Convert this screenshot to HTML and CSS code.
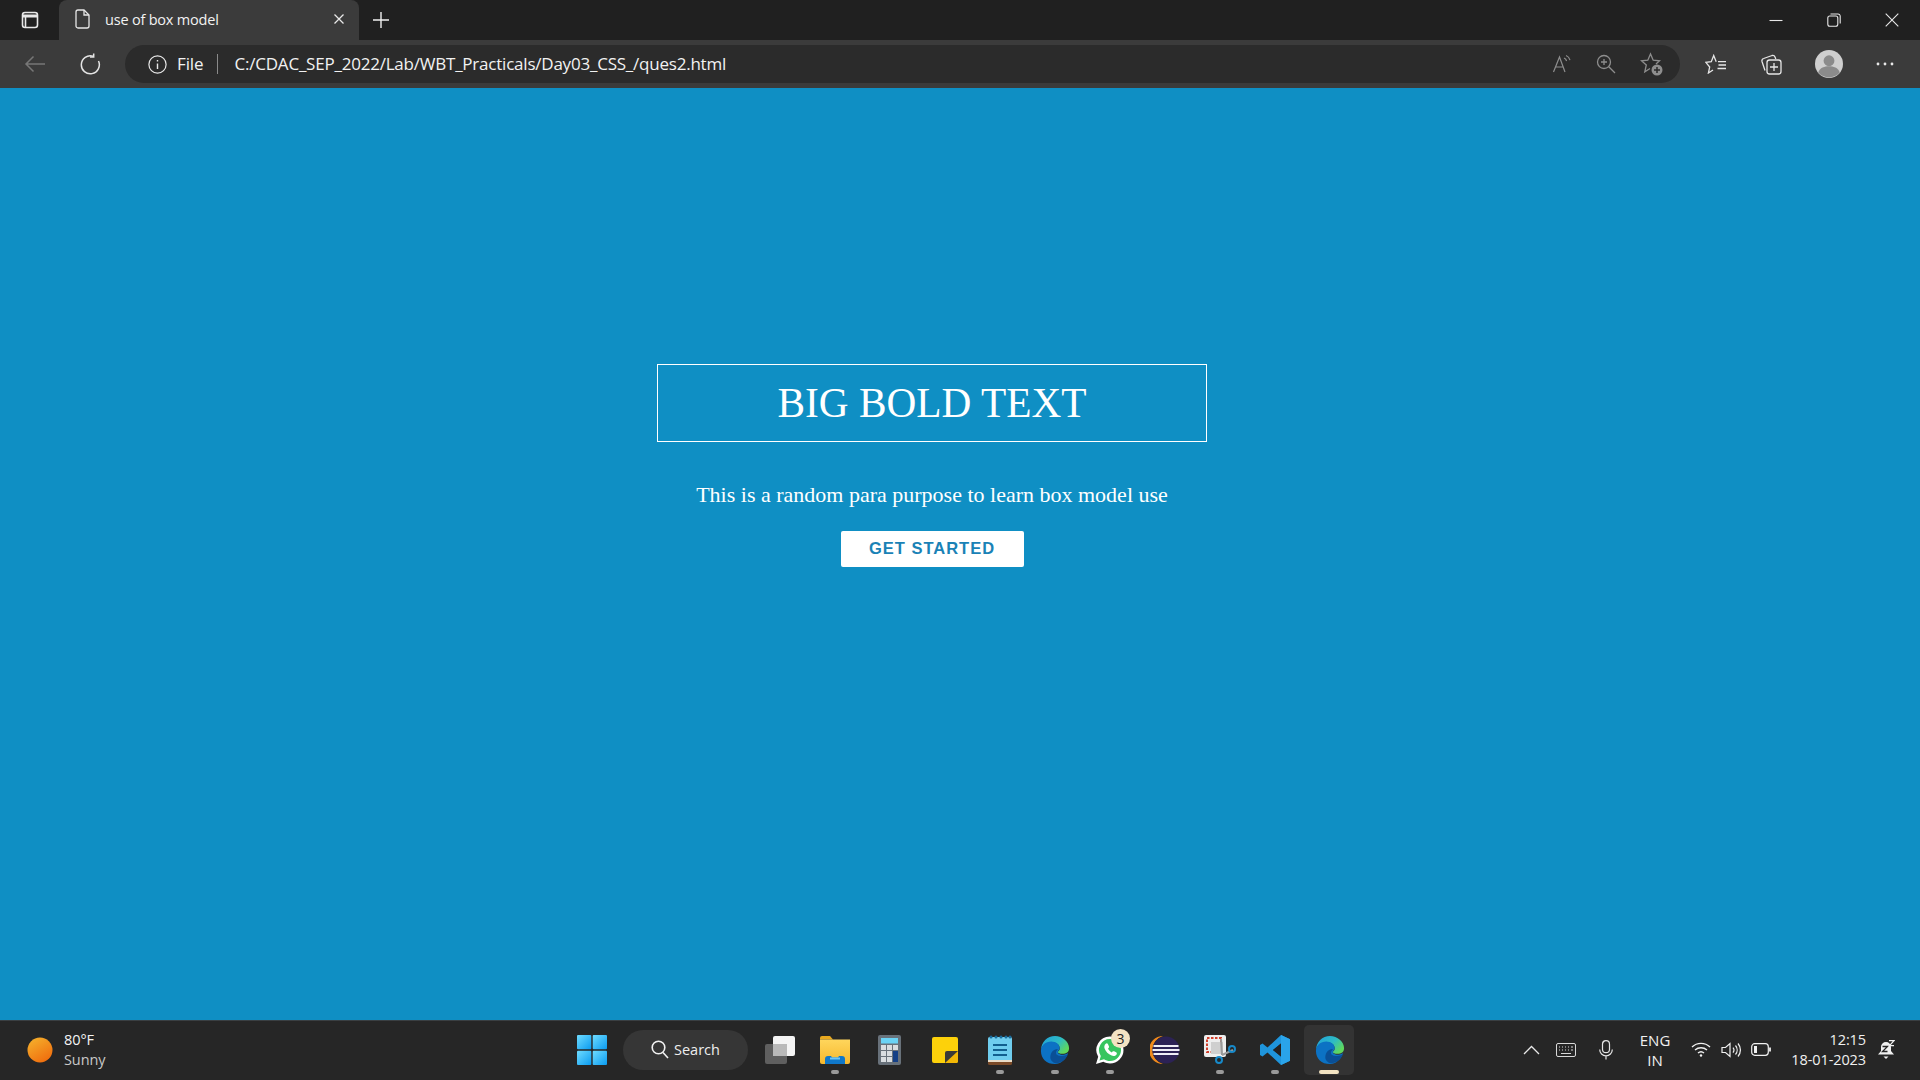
FILE: index.html
```html
<!DOCTYPE html>
<html lang="en">
<head>
<meta charset="utf-8">
<title>use of box model</title>
<link rel="stylesheet" href="styles.css">
</head>
<body>
<svg class="defs" width="0" height="0" aria-hidden="true">
  <defs>
    <linearGradient id="winG" x1="0" y1="0" x2="1" y2="1"><stop offset="0" stop-color="#6fdcff"/><stop offset="1" stop-color="#0a9bf0"/></linearGradient>
    <linearGradient id="sunG" x1="0" y1="0" x2="0.6" y2="1"><stop offset="0" stop-color="#f5b52e"/><stop offset="1" stop-color="#f0700f"/></linearGradient>
    <linearGradient id="edgeG" x1="0" y1="0" x2="1" y2="0.6"><stop offset="0" stop-color="#1f9fdc"/><stop offset="0.6" stop-color="#2ebcc4"/><stop offset="1" stop-color="#5fd85c"/></linearGradient>
    <linearGradient id="folderG" x1="0" y1="0" x2="0" y2="1"><stop offset="0" stop-color="#ffd65c"/><stop offset="1" stop-color="#f5b82e"/></linearGradient>
    <symbol id="edge" viewBox="0 0 32 32">
      <path d="M1 17C1 7 8 1 16 1c8 0 15 6 15 13 0 4-3 6-7 6-3 0-5-1-5-2 0-1 2-1 2-4 0-3-3-6-7-6C7 8 1 11 1 17z" fill="url(#edgeG)"/>
      <path d="M1 17C1 11 6 7 12 7c5 0 9 3 9 7 0 2-2 2-2 4 0 2 3 3 6 3 2 0 4-1 5-2-2 7-8 12-14 12C7 31 1 25 1 17z" fill="#0c72c4"/>
      <path d="M11 24c0-5 3-9 8-9 0 1-2 2-2 4 0 3 4 4 8 3 2 0 4-1 5-2-2 6-7 10-13 10-3 0-6-3-6-6z" fill="#0a4f96"/>
    </symbol>
  </defs>
</svg>
<div class="window">
  <header class="tabstrip">
    <button class="tab-side" aria-label="Tab actions">
      <svg width="20" height="20" viewBox="0 0 20 20" fill="none" stroke="#e8e8e8" stroke-width="1.6"><rect x="2.5" y="2.5" width="15" height="15" rx="2.5"/><path d="M2.5 6h15" stroke-width="3"/><path d="M5.5 7v10"/></svg>
    </button>
    <div class="tab">
      <svg class="tab-doc" width="16" height="20" viewBox="0 0 16 20" fill="none" stroke="#e6e6e6" stroke-width="1.3"><path d="M3 1h6l5 5v11a2 2 0 0 1-2 2H3a2 2 0 0 1-2-2V3a2 2 0 0 1 2-2z"/><path d="M9 1v5h5"/></svg>
      <span class="tab-title">use of box model</span>
      <svg class="tab-x" width="12" height="12" viewBox="0 0 12 12" stroke="#e8e8e8" stroke-width="1.3"><path d="M1.5 1.5l9 9M10.5 1.5l-9 9"/></svg>
    </div>
    <svg class="tab-plus" width="18" height="18" viewBox="0 0 18 18" stroke="#f0f0f0" stroke-width="1.4"><path d="M9 1v16M1 9h16"/></svg>
    <div class="win-controls">
      <svg width="14" height="14" viewBox="0 0 14 14" stroke="#e8e8e8" stroke-width="1.1"><path d="M0.5 7.5h13"/></svg>
      <svg width="14" height="14" viewBox="0 0 14 14" fill="none" stroke="#e8e8e8" stroke-width="1.1"><rect x="0.8" y="3" width="10" height="10.2" rx="2"/><path d="M3.5 1h7.5A2.2 2.2 0 0 1 13.2 3.2V10.5"/></svg>
      <svg width="14" height="14" viewBox="0 0 14 14" stroke="#e8e8e8" stroke-width="1.1"><path d="M0.7 0.7l12.6 12.6M13.3 0.7L0.7 13.3"/></svg>
    </div>
  </header>

  <nav class="toolbar">
    <svg class="nav-back" width="22" height="18" viewBox="0 0 22 18" fill="none" stroke="#777" stroke-width="1.5"><path d="M21 9H2M9.5 1.500L2 9l7.5 7.5"/></svg>
    <svg class="nav-reload" width="22" height="22" viewBox="0 0 22 22" fill="none" stroke="#e4e4e4" stroke-width="1.5"><path d="M19.500 8A9 9 0 1 1 14 3.200"/><path d="M14.700 0.500V4h-3.700"/></svg>
    <div class="address">
      <svg class="addr-info" width="19" height="19" viewBox="0 0 19 19" fill="none" stroke="#e8e8e8" stroke-width="1.2"><circle cx="9.5" cy="9.5" r="8.6"/><path d="M9.5 8.5v5.5M9.5 5v1.6" stroke-width="1.4"/></svg>
      <span class="addr-file">File</span>
      <span class="addr-sep"></span>
      <span class="addr-url">C:/CDAC_SEP_2022/Lab/WBT_Practicals/Day03_CSS_/ques2.html</span>
      <div class="addr-icons">
        <svg width="20" height="20" viewBox="0 0 20 20" fill="none" stroke="#8e8e8e" stroke-width="1.2"><path d="M1.5 18L7.5 3 13 18M3.500 13h8"/><path d="M12 4c1.400.6 2.200 1.600 2.600 3M14 1.500c2 .8 3.400 2.400 4 4.600"/></svg>
        <svg width="20" height="20" viewBox="0 0 20 20" fill="none" stroke="#8e8e8e" stroke-width="1.3"><circle cx="8" cy="8" r="6.5"/><path d="M12.800 12.800L19 19M8 5v6M5 8h6"/></svg>
        <svg width="24" height="24" viewBox="0 0 24 24" fill="none" stroke="#8e8e8e" stroke-width="1.3"><path d="M10 16.500L4.800 19.800l1.500-6.800L1.500 8.800l6.300-.6L10.500 2l2.700 6.200 6.300.6-3.500 3.200"/><circle cx="17" cy="18" r="5.500" fill="#8e8e8e" stroke="none"/><path d="M17 15v6M14 18h6" stroke="#2b2b2b" stroke-width="1.500"/></svg>
      </div>
    </div>
    <div class="tool-icons">
      <svg width="22" height="20" viewBox="0 0 22 20" fill="none" stroke="#e6e6e6" stroke-width="1.300"><path d="M8 16L3.400 19l1.300-6L0.800 8.300l5.500-.6L8.700 1.500l2.500 6.200"/><path d="M13 7.700h8M13.500 11h7.500M12.500 14.500h8.500"/></svg>
      <svg width="22" height="22" viewBox="0 0 22 22" fill="none" stroke="#e6e6e6" stroke-width="1.300"><path d="M5 17.500L2 8.500a2.500 2.500 0 0 1 1.700-3L12 2.500a2.500 2.500 0 0 1 3 1.500l.8 2"/><rect x="7" y="7" width="14" height="14" rx="2.500"/><path d="M14 10v8M10 14h8"/></svg>
      <svg width="28" height="28" viewBox="0 0 30 30"><circle cx="15" cy="15" r="15" fill="#cfcfcf"/><circle cx="15" cy="11.500" r="5.800" fill="#8b8b8b"/><path d="M3.500 24c1.500-5 7-6.500 11.500-6.500S25 19 26.500 24A15 15 0 0 1 3.500 24z" fill="#8b8b8b"/></svg>
      <svg width="18" height="4" viewBox="0 0 18 4" fill="#e8e8e8"><circle cx="2" cy="2" r="1.400"/><circle cx="9" cy="2" r="1.400"/><circle cx="16" cy="2" r="1.400"/></svg>
    </div>
  </nav>

  <main class="page">
    <div class="hero">
      <h1 class="hero-title">BIG BOLD TEXT</h1>
      <p class="hero-text">This is a random para purpose to learn box model use</p>
      <a class="hero-btn">GET STARTED</a>
    </div>
  </main>

  <footer class="taskbar">
    <div class="weather">
      <svg width="26" height="26" viewBox="0 0 26 26"><circle cx="13" cy="13" r="12.500" fill="url(#sunG)"/></svg>
      <div class="weather-text"><span class="temp">80°F</span><span class="cond">Sunny</span></div>
    </div>

    <div class="apps">
      <div class="app">
        <svg width="30" height="30" viewBox="0 0 30 30" fill="url(#winG)"><rect x="0" y="0" width="14.300" height="14.300" rx="1"/><rect x="15.700" y="0" width="14.300" height="14.300" rx="1"/><rect x="0" y="15.700" width="14.300" height="14.300" rx="1"/><rect x="15.700" y="15.700" width="14.300" height="14.300" rx="1"/></svg>
      </div>
      <div class="search">
        <svg width="18" height="19" viewBox="0 0 18 19" fill="none" stroke="#f2f2f2" stroke-width="1.600"><circle cx="7.500" cy="7.500" r="6.300"/><path d="M12 12.500l5 5.500"/></svg>
        <span>Search</span>
      </div>
      <div class="app">
        <svg width="30" height="28" viewBox="0 0 30 28"><rect x="8" y="0" width="22" height="20" rx="2" fill="#f4f4f4"/><rect x="0" y="8" width="22" height="20" rx="2" fill="#5f5f5f"/><rect x="8" y="8" width="14" height="12" fill="#b9b9b9"/></svg>
      </div>
      <div class="app running">
        <svg width="30" height="28" viewBox="0 0 30 28"><path d="M0 2a2 2 0 0 1 2-2h8l3 3.500H0z" fill="#e9a91f"/><path d="M0 3.500h30V26a2 2 0 0 1-2 2H2a2 2 0 0 1-2-2z" fill="url(#folderG)"/><path d="M5 28v-5a3 3 0 0 1 3-3h3l1 1.500h6l1-1.500h3a3 3 0 0 1 3 3v5z" fill="#0f77c9"/><rect x="10" y="21.500" width="10" height="2" fill="#6dc6f5"/></svg>
      </div>
      <div class="app">
        <svg width="23" height="30" viewBox="0 0 23 30"><rect width="23" height="30" rx="2" fill="#68717a"/><rect x="3" y="3" width="17" height="5.500" fill="#6bd3f5"/><g fill="#d9dde0"><rect x="3" y="10" width="5" height="5"/><rect x="9" y="10" width="5" height="5"/><rect x="15" y="10" width="5" height="5"/><rect x="3" y="16" width="5" height="5"/><rect x="9" y="16" width="5" height="5"/><rect x="3" y="22" width="5" height="5"/><rect x="9" y="22" width="5" height="5"/></g><rect x="15" y="16" width="5" height="11" fill="#143f86"/></svg>
      </div>
      <div class="app">
        <svg width="26" height="26" viewBox="0 0 26 26"><rect width="26" height="26" rx="2" fill="#fdd10a"/><path d="M13 26V16a2 2 0 0 1 2-2h11v10a2 2 0 0 1-2 2z" fill="#f2b705"/><path d="M13 26V16a2 2 0 0 1 2-2h11z" fill="#3b3a36"/></svg>
      </div>
      <div class="app running">
        <svg width="24" height="30" viewBox="0 0 24 30"><rect y="2" width="24" height="26" rx="1.500" fill="#6fcdee"/><path d="M0 26h24v2.500a1.500 1.500 0 0 1-1.500 1.500h-21A1.500 1.500 0 0 1 0 28.500z" fill="#7a4a28"/><rect y="25" width="24" height="2" fill="#e8dcc8"/><g fill="#125f8e"><rect x="5" y="9" width="14" height="2"/><rect x="5" y="14" width="14" height="2"/><rect x="5" y="19" width="14" height="2"/></g><g fill="#1a6c9c"><circle cx="3" cy="2" r="1.500"/><circle cx="8" cy="2" r="1.500"/><circle cx="13" cy="2" r="1.500"/><circle cx="18" cy="2" r="1.500"/><circle cx="22" cy="2" r="1.500"/></g></svg>
      </div>
      <div class="app running"><svg width="30" height="30"><use href="#edge"/></svg></div>
      <div class="app running">
        <svg width="30" height="30" viewBox="0 0 30 30"><path d="M15 1.500a13.500 13.500 0 0 1 0 27c-2.400 0-4.600-.6-6.600-1.700L1 29l2.200-7.200A13.500 13.500 0 0 1 15 1.500z" fill="#fff"/><path d="M15 4a11 11 0 0 1 0 22c-2.200 0-4.300-.7-6-1.800L4.500 25.500 5.800 21A11 11 0 0 1 15 4z" fill="#37c55f"/><path d="M10.500 9c1-1 2-.8 2.500.3l1 2.200c.2.600 0 1-.4 1.500l-.6.700c.8 1.500 2.200 2.900 3.800 3.700l.8-.8c.5-.5 1-.5 1.500-.3l2 1c.9.500 1 1.500.3 2.400-1 1.300-2.800 1.700-4.800.9-3.200-1.200-6.100-4.100-7.100-7.300-.5-1.700 0-3.300 1-4.300z" fill="#fff"/></svg>
        <span class="badge">3</span>
      </div>
      <div class="app">
        <svg width="30" height="30" viewBox="0 0 30 30"><path d="M13 1A14 14 0 0 0 13 29 14.500 14.500 0 0 1 13 1z" fill="#f08a1d"/><circle cx="16" cy="15" r="13.500" fill="#2c2255"/><g fill="#efeef6"><rect x="3.500" y="10" width="25" height="2"/><rect x="2.500" y="14" width="27" height="2"/><rect x="3.500" y="18" width="25" height="2"/></g></svg>
      </div>
      <div class="app running">
        <svg width="32" height="30" viewBox="0 0 32 30"><rect width="22" height="22" rx="2" fill="#eeeeee"/><path d="M3 3h14v14H3z" fill="none" stroke="#d2402d" stroke-width="2" stroke-dasharray="2.500 1.500"/><rect x="7" y="7" width="12" height="12" fill="#cfcfcf"/><path d="M17 4l1 16" stroke="#9a9a9a" stroke-width="2"/><path d="M18 20l11-5" stroke="#9a9a9a" stroke-width="2"/><circle cx="15" cy="25" r="3" fill="none" stroke="#1789c9" stroke-width="2"/><circle cx="28" cy="14" r="3" fill="none" stroke="#1789c9" stroke-width="2"/></svg>
      </div>
      <div class="app running">
        <svg width="30" height="30" viewBox="0 0 30 30"><path d="M21 0l9 4.200v21.600L21 30 7.500 17.500 2.500 21.500 0 20V10l2.500-1.500 5 4zM21 8.500L13 15l8 6.500z" fill="#1f95dc"/><path d="M21 0l9 4.200v21.600L21 30z" fill="#2aa4ea"/><path d="M21 8.500L13 15l8 6.500z" fill="#232323"/></svg>
      </div>
      <div class="app active">
        <svg width="30" height="30"><use href="#edge"/></svg>
      </div>
    </div>

    <div class="tray">
      <svg class="tray-up" width="17" height="10" viewBox="0 0 17 10" fill="none" stroke="#e8e8e8" stroke-width="1.300"><path d="M1 9l7.500-7.500L16 9"/></svg>
      <svg class="tray-kbd" width="20" height="14" viewBox="0 0 20 14" fill="none" stroke="#d8d8d8" stroke-width="1"><rect x="0.500" y="0.500" width="19" height="13" rx="1.500"/><path d="M3 4h1M6 4h1M9 4h1M12 4h1M15 4h2M3 7h1M6 7h1M9 7h1M12 7h1M15 7h2M5 10.500h10" stroke-width="1.200"/></svg>
      <svg class="tray-mic" width="14" height="20" viewBox="0 0 14 20" fill="none" stroke="#e4e4e4" stroke-width="1.200"><rect x="3.500" y="0.700" width="7" height="12" rx="3.500"/><path d="M0.700 9.500a6.300 6.300 0 0 0 12.600 0M7 16v3.500"/></svg>
      <div class="tray-lang"><span>ENG</span><span>IN</span></div>
      <div class="tray-net">
        <svg width="20" height="15" viewBox="0 0 20 15" fill="none" stroke="#f0f0f0" stroke-width="1.400"><path d="M1 5a13 13 0 0 1 18 0M4 8a9 9 0 0 1 12 0M7 11a4.500 4.500 0 0 1 6 0"/><circle cx="10" cy="13.500" r="1.200" fill="#f0f0f0" stroke="none"/></svg>
        <svg width="20" height="16" viewBox="0 0 20 16" fill="none" stroke="#f0f0f0" stroke-width="1.200"><path d="M1 5.500h3.500L9 1.500v13l-4.500-4H1z"/><path d="M12 5.500a4 4 0 0 1 0 5M14.500 3.500a7 7 0 0 1 0 9M17 1.500a10 10 0 0 1 0 13"/></svg>
        <svg width="20" height="13" viewBox="0 0 20 13" fill="none" stroke="#f0f0f0" stroke-width="1.200"><rect x="0.700" y="0.700" width="16.600" height="11.600" rx="3"/><rect x="3" y="3" width="3" height="7" fill="#f0f0f0" stroke="none"/><path d="M19 4.500v4" stroke-width="1.800"/></svg>
      </div>
      <div class="tray-clock"><span>12:15</span><span>18-01-2023</span></div>
      <svg class="tray-bell" width="17" height="20" viewBox="0 0 17 20"><path d="M8 2a5 5 0 0 1 5 5v4l3 3.500H0L3 11V7a5 5 0 0 1 5-5z" fill="#f0f0f0"/><path d="M5.500 16.500h5L8 19z" fill="#f0f0f0"/><path d="M4.500 6.500h5l-5 5h5" fill="none" stroke="#262626" stroke-width="1.300"/><path d="M11 0.700h5l-4.500 5H16" fill="none" stroke="#f0f0f0" stroke-width="1.200"/></svg>
    </div>
  </footer>
</div>
</body>
</html>
```

FILE: styles.css
```css
* { box-sizing: border-box; }
html, body { margin: 0; height: 100%; }
body { overflow: hidden; font-family: "Open Sans", "Noto Sans", sans-serif; color: #fff; }
.defs { position: absolute; }
.window { display: flex; flex-direction: column; height: 1080px; }

/* tab strip */
.tabstrip { flex: 0 0 40px; background: #202020; display: flex; align-items: stretch; }
.tab-side { width: 59px; padding: 0 0 0 1px; border: 0; background: none; display: flex; align-items: center; justify-content: center; }
.tab { width: 300px; background: #3b3b3b; border-radius: 8px 8px 0 0; display: flex; align-items: center; padding: 0 14px 2px 16px; }
.tab-doc { margin-right: 14px; flex: none; }
.tab-title { flex: 1; font-size: 14.500px; letter-spacing: -0.2px; color: #f2f2f2; }
.tab-x { flex: none; }
.tab-plus { align-self: center; margin-left: 13px; }
.win-controls { margin-left: auto; display: flex; align-items: center; gap: 44px; padding-right: 21px; }

/* toolbar */
.toolbar { flex: 0 0 48px; background: #3b3b3b; display: flex; align-items: center; padding: 0 24px; }
.nav-back { flex: none; }
.nav-reload { flex: none; margin-left: 33px; }
.address { flex: none; width: 1555px; height: 38px; margin-left: 24px; background: #2b2b2b; border-radius: 19px; display: flex; align-items: center; padding: 0 0 0 23px; }
.addr-file { margin: 0 0 2px 10px; font-size: 17px; letter-spacing: -0.1px; color: #f2f2f2; }
.addr-sep { width: 1px; height: 20px; margin: 0 17px 0 13px; background: #8a8a8a; }
.addr-url { margin-bottom: 2px; font-size: 17px; letter-spacing: -0.22px; color: #f2f2f2; white-space: nowrap; }
.addr-icons { margin-left: auto; display: flex; align-items: center; gap: 24px; padding-right: 16px; }
.tool-icons { display: flex; align-items: center; gap: 33px; margin-left: 25px; }

/* page */
.page { flex: 1; background: #0f8fc4; padding: 276px 0 0 657px; }
.hero { width: 550px; display: flex; flex-direction: column; align-items: center; }
.hero-title { width: 100%; height: 78px; margin: 0; border: 1px solid #fff; font: 400 41.300px/76px "Liberation Serif", serif; text-align: center; color: #fff; }
.hero-text { margin: 39px 0 0; font: 400 22px/28px "Liberation Serif", serif; color: #fff; }
.hero-btn { width: 183px; height: 36px; margin-top: 22px; background: #fff; border-radius: 2px; color: #1a82b6; font: 700 16.500px/35px "Liberation Sans", sans-serif; letter-spacing: 1px; text-align: center; }

/* taskbar */
.taskbar { flex: 0 0 60px; background: #262626; border-top: 1px solid #3a3f42; padding-bottom: 2px; display: grid; grid-template-columns: 1fr auto 1fr; align-items: center; }
.weather { display: flex; align-items: center; padding-left: 27px; gap: 11px; }
.weather-text { display: flex; flex-direction: column; font-size: 14.500px; line-height: 20px; letter-spacing: -0.1px; }
.temp { color: #f4f4f4; }
.cond { color: #c8c8c8; }
.apps { display: flex; align-items: center; padding-left: 1px; }
.app { position: relative; width: 55px; height: 54px; display: flex; align-items: center; justify-content: center; border-radius: 5px; }
.app > svg { position: relative; }
.search { width: 125px; height: 40px; margin: 0 4px; background: #363636; border-radius: 20px; display: flex; align-items: center; justify-content: center; gap: 5px; font-size: 14.500px; color: #eee; }
.running::after { content: ""; position: absolute; left: 24px; bottom: 3px; width: 8px; height: 3.500px; border-radius: 2px; background: #9a9a9a; }
.active::before { content: ""; position: absolute; left: 2px; top: 2px; width: 50px; height: 50px; border-radius: 5px; background: #333; }
.active::after { content: ""; position: absolute; left: 17px; bottom: 3px; width: 20px; height: 3.500px; border-radius: 2px; background: #f2e3c2; }
.badge { position: absolute; top: 6px; right: 7px; width: 19px; height: 19px; border-radius: 50%; background: #f3e3c3; color: #222; font-size: 14px; line-height: 19px; text-align: center; }
.tray { display: flex; align-items: center; justify-content: flex-end; padding-right: 25px; color: #f0f0f0; }
.tray-up { margin-right: 16px; }
.tray-kbd { margin-right: 23px; }
.tray-mic { margin-right: 27px; }
.tray-lang { display: flex; flex-direction: column; align-items: center; font-size: 15px; line-height: 20px; margin-right: 21px; }
.tray-net { display: flex; align-items: center; gap: 10px; margin-right: 20px; }
.tray-clock { display: flex; flex-direction: column; align-items: flex-end; font-size: 14.500px; line-height: 20px; letter-spacing: -0.1px; margin-right: 12px; }
```
